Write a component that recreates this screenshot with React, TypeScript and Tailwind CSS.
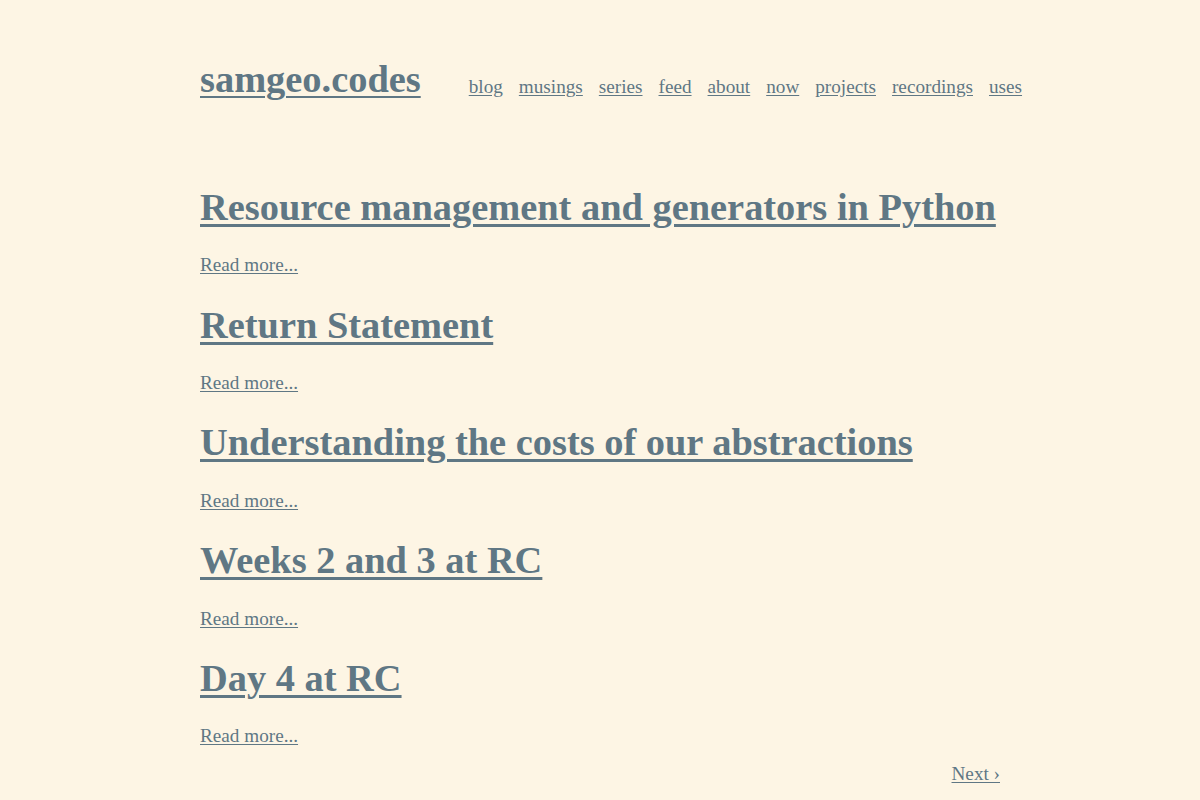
const posts = [
  'Resource management and generators in Python',
  'Return Statement',
  'Understanding the costs of our abstractions',
  'Weeks 2 and 3 at RC',
  'Day 4 at RC',
];

const navLinks = ['blog', 'musings', 'series', 'feed', 'about', 'now', 'projects', 'recordings', 'uses'];

export default function App() {
  return (
    <div className="min-h-screen bg-[#fdf5e4] text-[#5f7784] font-['Liberation_Serif',serif]">
      <div className="w-[800px] mx-auto pt-[57px]">
        {/* Header */}
        <header className="flex items-baseline gap-12 whitespace-nowrap">
          <a href="#" className="text-[38.4px] leading-[44px] font-bold underline decoration-2 underline-offset-[4px]">
            samgeo.codes
          </a>
          <nav className="relative top-px flex gap-4 text-[19.2px] leading-[22px]">
            {navLinks.map(l => (
              <a key={l} href="#" className="underline underline-offset-[2px]">{l}</a>
            ))}
          </nav>
        </header>

        {/* Posts */}
        <main className="mt-[84px]">
          {posts.map((title, i) => (
            <article key={title} className={i > 0 ? 'mt-[26.25px]' : ''}>
              <h2 className="text-[38.4px] leading-[44px] font-bold">
                <a href="#" className="underline decoration-[2.5px] underline-offset-[4px]">{title}</a>
              </h2>
              <p className="mt-[25.45px] text-[19.2px] leading-[22px]">
                <a href="#" className="underline underline-offset-[2px]">Read more...</a>
              </p>
            </article>
          ))}
          <div className="mt-4 flex justify-end text-[19.2px] leading-[22px]">
            <a href="#" className="underline underline-offset-[2px]">Next ›</a>
          </div>
        </main>
      </div>
    </div>
  );
}
